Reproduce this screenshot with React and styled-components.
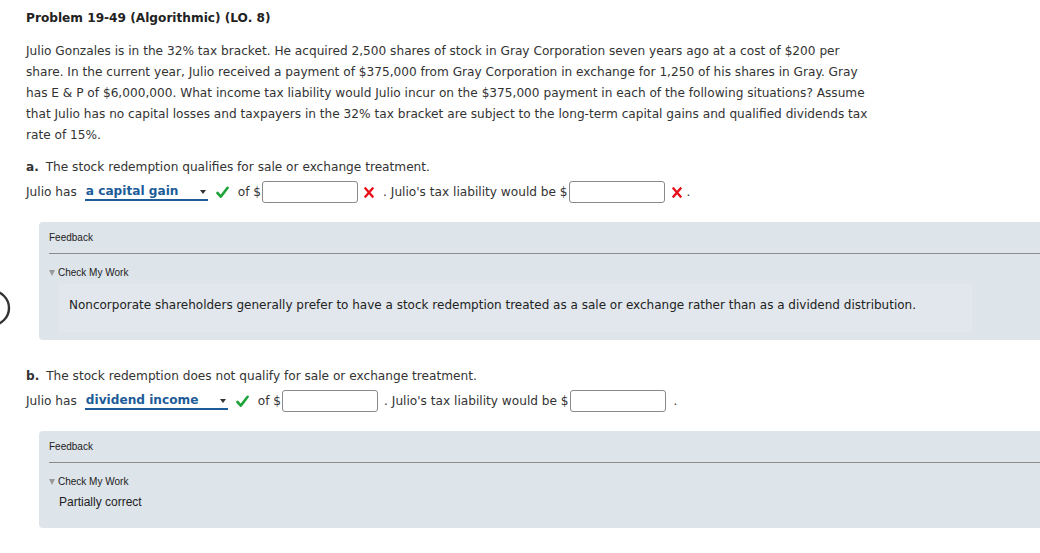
import React from 'react'
import styled, { createGlobalStyle } from 'styled-components'

const GlobalStyle = createGlobalStyle`
  html, body {
    margin: 0;
    padding: 0;
    background: #fff;
    overflow: hidden;
  }
  body {
    font-family: "DejaVu Sans", Verdana, sans-serif;
    color: #333;
  }
`

const parts = [
  {
    letter: 'a.',
    prompt: 'The stock redemption qualifies for sale or exchange treatment.',
    answer: 'a capital gain',
    selectWidth: 123,
    graded: true,
    feedback: 'note'
  },
  {
    letter: 'b.',
    prompt: 'The stock redemption does not qualify for sale or exchange treatment.',
    answer: 'dividend income',
    selectWidth: 143,
    graded: false,
    feedback: 'partial'
  }
]

function CheckIcon() {
  return (
    <svg width="13" height="13" viewBox="0 0 13 13">
      <path
        d="M1.5 7 L4.8 10.6 L11.6 1.8"
        fill="none"
        stroke="#1fa33a"
        strokeWidth="2.6"
        strokeLinecap="round"
        strokeLinejoin="round"
      />
    </svg>
  )
}

function CrossIcon() {
  return (
    <svg width="10" height="11" viewBox="0 0 10 11">
      <path
        d="M1.5 1.5 L8.5 9.5 M8.5 1.5 L1.5 9.5"
        stroke="#e8101a"
        strokeWidth="2.4"
        strokeLinecap="square"
      />
    </svg>
  )
}

export default function App() {
  return (
    <Page>
      <GlobalStyle />
      <Ring viewBox="0 0 20 40" width="20" height="40">
        <circle cx="-8" cy="20" r="17" fill="none" stroke="#333" strokeWidth="2.4" />
      </Ring>
      <Title>Problem 19-49 (Algorithmic) (LO. 8)</Title>
      <Intro>
        Julio Gonzales is in the 32% tax bracket. He acquired 2,500 shares of stock in Gray Corporation seven years ago at a cost of $200 per
        <br />
        share. In the current year, Julio received a payment of $375,000 from Gray Corporation in exchange for 1,250 of his shares in Gray. Gray
        <br />
        has E &amp; P of $6,000,000. What income tax liability would Julio incur on the $375,000 payment in each of the following situations? Assume
        <br />
        that Julio has no capital losses and taxpayers in the 32% tax bracket are subject to the long-term capital gains and qualified dividends tax
        <br />
        rate of 15%.
      </Intro>

      {parts.map((p) => (
        <Part key={p.letter}>
          <Prompt>
            <b>{p.letter}</b> {p.prompt}
          </Prompt>
          <AnswerRow>
            <span>Julio has</span>
            <Select $width={p.selectWidth}>
              {p.answer}
              <Caret />
            </Select>
            <Mark $gap={8}>
              <CheckIcon />
            </Mark>
            <Text $left={9}>of $</Text>
            <Field type="text" $width={96} />
            {p.graded && (
              <Mark $gap={6}>
                <CrossIcon />
              </Mark>
            )}
            <Text $left={p.graded ? 9 : 6}>. Julio's tax liability would be $</Text>
            <Field type="text" $width={96} />
            {p.graded && (
              <Mark $gap={7}>
                <CrossIcon />
              </Mark>
            )}
            <Text $left={p.graded ? 5 : 8}>.</Text>
          </AnswerRow>

          <Feedback>
            <FeedbackHead>Feedback</FeedbackHead>
            <Rule />
            <Toggle>
              <Arrow />
              Check My Work
            </Toggle>
            {p.feedback === 'note' ? (
              <Note>
                Noncorporate shareholders generally prefer to have a stock redemption treated as a sale or exchange rather than as a dividend distribution.
              </Note>
            ) : (
              <Partial>Partially correct</Partial>
            )}
          </Feedback>
        </Part>
      ))}
    </Page>
  )
}

const Page = styled.div`
  position: relative;
  width: 1040px;
  height: 553px;
  padding: 10px 0 0 26px;
  box-sizing: border-box;
  font-size: 12.15px;
`

const Ring = styled.svg`
  position: absolute;
  left: 0;
  top: 288px;
`

const Title = styled.div`
  font-weight: bold;
  font-size: 12.15px;
  line-height: 16px;
  color: #222;
`

const Intro = styled.p`
  margin: 15px 0 0;
  line-height: 21px;
  white-space: nowrap;
`

const Part = styled.section`
  margin-top: 13px;
  & + & {
    margin-top: 28px;
  }
`

const Prompt = styled.div`
  line-height: 16px;
  b {
    margin-right: 3px;
  }
`

const AnswerRow = styled.div`
  display: flex;
  align-items: center;
  height: 24px;
  margin-top: 5px;
`

const Select = styled.div`
  position: relative;
  flex: none;
  width: ${(p) => p.$width}px;
  margin-left: 8px;
  height: 17px;
  line-height: 15px;
  padding-left: 1px;
  box-sizing: border-box;
  border-bottom: 2px solid #1d5c98;
  color: #1d5c98;
  font-weight: bold;
  font-size: 12.15px;
`

const Caret = styled.span`
  position: absolute;
  right: 2px;
  top: 6px;
  border-left: 3.5px solid transparent;
  border-right: 3.5px solid transparent;
  border-top: 4px solid #333;
`

const Mark = styled.span`
  display: inline-flex;
  flex: none;
  margin-left: ${(p) => p.$gap}px;
`

const Text = styled.span`
  margin-left: ${(p) => p.$left}px;
  white-space: nowrap;
`

const Field = styled.input`
  flex: none;
  width: ${(p) => p.$width}px;
  height: 22px;
  box-sizing: border-box;
  margin: 0 0 0 1px;
  border: 1px solid #8a8a8a;
  border-radius: 3px;
  background: #fff;
  padding: 0 4px;
`

const Feedback = styled.div`
  margin: 18px 0 0 13px;
  width: 1020px;
  background: #dde4ea;
  border-radius: 4px;
  padding: 10px 0 8px 10px;
  box-sizing: border-box;
  font-family: Arial, "Liberation Sans", sans-serif;
  color: #222;
`

const FeedbackHead = styled.div`
  font-size: 10px;
  line-height: 12px;
`

const Rule = styled.div`
  height: 1px;
  background: #8c8c8c;
  margin-top: 9px;
`

const Toggle = styled.div`
  display: flex;
  align-items: center;
  gap: 3px;
  margin-top: 13px;
  font-size: 10px;
  line-height: 12px;
`

const Arrow = styled.span`
  border-left: 3px solid transparent;
  border-right: 3px solid transparent;
  border-top: 6px solid #999;
`

const Note = styled.div`
  margin: 5px 0 0 10px;
  width: 913px;
  padding: 13px 10px 19px;
  box-sizing: border-box;
  background: #e1e7ec;
  font-family: "DejaVu Sans", Verdana, sans-serif;
  font-size: 12px;
  line-height: 16px;
  white-space: nowrap;
`

const Partial = styled.div`
  margin: 6px 0 10px 10px;
  font-size: 12px;
  line-height: 16px;
`
